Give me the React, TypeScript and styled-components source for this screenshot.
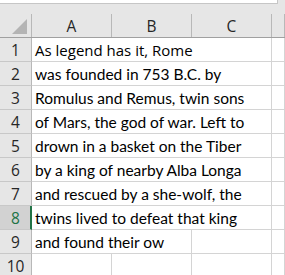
import React from 'react'
import styled, { createGlobalStyle } from 'styled-components'

const GlobalStyle = createGlobalStyle`
    html, body {
        margin: 0;
        padding: 0;
        background: #ffffff;
        overflow: hidden;
    }
`

const Sheet = styled.div`
    width: 285px;
    height: 275px;
    overflow: hidden;
    background: #e6e6e6;
    font-family: 'Lato', 'Liberation Sans', sans-serif;
`

const FormulaBar = styled.div`
    width: 278px;
    height: 4px;
    background: #ffffff;
    border-bottom: 1px solid #c6c6c6;
    border-right: 1px solid #c6c6c6;
    box-sizing: border-box;
`

const TopGap = styled.div`
    height: 10px;
`

const Row = styled.div`
    display: grid;
    grid-template-columns: 32px 80px 80px 80px 1fr;
`

const HeaderRow = styled(Row)`
    height: 24px;
    border-bottom: 1px solid #a0a0a0;
    box-sizing: border-box;
`

const ColHead = styled.div`
    border-right: 1px solid #b8b8b8;
    display: flex;
    align-items: center;
    justify-content: center;
    font-family: 'Open Sans', 'Noto Sans', sans-serif;
    font-size: 15.5px;
    color: #262626;
    padding-top: 1px;
`

const Corner = styled.div`
    border-right: 1px solid #b8b8b8;
    position: relative;
`

const CornerTriangle = styled.div`
    position: absolute;
    right: 4px;
    bottom: 3px;
    width: 0;
    height: 0;
    border-left: 15px solid transparent;
    border-bottom: 15px solid #b4b4b4;
`

const BodyRow = styled(Row)`
    height: 24px;
`

const RowHead = styled.div<{ $selected?: boolean }>`
    background: ${p => p.$selected ? '#d2d2d2' : '#e6e6e6'};
    border-bottom: 1px solid #c8c8c8;
    border-right: ${p => p.$selected ? '2px solid #217346' : '1px solid #b8b8b8'};
    display: flex;
    align-items: center;
    justify-content: center;
    font-family: 'Open Sans', 'Noto Sans', sans-serif;
    font-size: 15.5px;
    color: ${p => p.$selected ? '#217346' : '#262626'};
    padding-left: ${p => p.$selected ? '1px' : '0'};
`

const Cell = styled.div<{ $span?: number }>`
    grid-column: span ${p => p.$span || 1};
    background: #ffffff;
    border-right: 1px solid #d4d4d4;
    border-bottom: 1px solid #d4d4d4;
    padding: 1px 0 0 3px;
    display: flex;
    align-items: center;
    white-space: nowrap;
    overflow: hidden;
    font-size: 15.5px;
    color: #000000;
`

const FirstLine = styled.span`
    font-family: 'Open Sans', 'Noto Sans', sans-serif;
    font-size: 15px;
`

const lines = [
    'As legend has it, Rome',
    'was founded in 753 B.C. by',
    'Romulus and Remus, twin sons',
    'of Mars, the god of war. Left to',
    'drown in a basket on the Tiber',
    'by a king of nearby Alba Longa',
    'and rescued by a she-wolf, the',
    'twins lived to defeat that king',
    'and found their ow',
]

export default function App() {
    return <Sheet>
        <GlobalStyle />
        <FormulaBar />
        <TopGap />
        <HeaderRow>
            <Corner><CornerTriangle /></Corner>
            <ColHead>A</ColHead>
            <ColHead>B</ColHead>
            <ColHead>C</ColHead>
            <ColHead />
        </HeaderRow>
        {lines.map((text, i) => {
            let span = i === 8 ? 2 : 3
            return <BodyRow key={i}>
                <RowHead $selected={i === 7}>{i + 1}</RowHead>
                <Cell $span={span}>{i === 0 ? <FirstLine>{text}</FirstLine> : text}</Cell>
                {span === 2 && <Cell />}
                <Cell />
            </BodyRow>
        })}
        <BodyRow>
            <RowHead>10</RowHead>
            <Cell />
            <Cell />
            <Cell />
            <Cell />
        </BodyRow>
    </Sheet>
}
